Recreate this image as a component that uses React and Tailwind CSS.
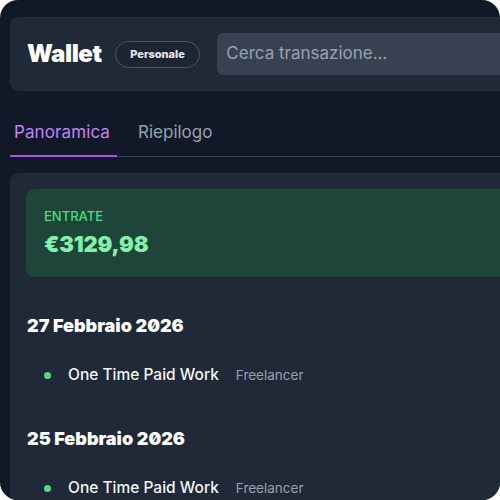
import React from "react";

const rows = [
  { date: "27 Febbraio 2026", title: "One Time Paid Work", tag: "Freelancer" },
  { date: "25 Febbraio 2026", title: "One Time Paid Work", tag: "Freelancer" },
];

const App = () => {
  return (
    <div className="w-[500px] h-[500px] bg-white overflow-hidden">
      <div
        className="w-[500px] h-[500px] rounded-[18px] bg-[#111827] overflow-hidden"
        style={{ fontFamily: "Inter, 'Noto Sans', sans-serif" }}
      >
        <div className="w-[640px] pl-[10px] pt-[17px]">
          {/* header */}
          <div className="h-[74px] rounded-lg bg-[#1f2937] flex items-center pl-[17px]">
            <h1 className="text-[24px] font-black text-white tracking-[-0.4px]">Wallet</h1>
            <span className="ml-[13px] h-[27px] px-[14.5px] flex items-center rounded-full border border-[#4b5563] bg-[#1d2533] text-[11px] font-extrabold text-gray-200">
              Personale
            </span>
            <div className="ml-[17px] h-[42px] flex-1 rounded-md bg-[#374151] flex items-center pl-[9px] text-[17px] text-gray-400">
              Cerca transazione...
            </div>
          </div>

          {/* tabs */}
          <div className="mt-[27px] flex border-b border-[#374151] h-[39px]">
            <div className="w-[107px] h-[39px] border-b-2 border-[#a855f7] text-[#c084fc] text-[17px] pl-[4px] pt-[2px] tracking-[0.1px]">
              Panoramica
            </div>
            <div className="ml-[21px] text-gray-400 text-[17px] pt-[2px]">Riepilogo</div>
          </div>

          {/* content */}
          <div className="mt-[16px] rounded-lg bg-[#1f2937] pl-[16px] pt-[16px] pb-8">
            <div className="h-[88px] rounded-lg bg-[#1e4539] pl-[18px] pt-[19px]">
              <div className="text-[13px] font-medium text-[#4ade80] leading-[16px]">ENTRATE</div>
              <div className="mt-[6px] text-[22px] font-black text-[#86efac] leading-[28px] tracking-[-0.2px]">
                €3129,98
              </div>
            </div>

            {rows.map((r, i) => (
              <div key={i} className={i === 0 ? "mt-[38px]" : "mt-[43px]"}>
                <div className="pl-[1px] text-[18px] font-black text-white leading-[22px] slashed-zero">
                  {r.date}
                </div>
                <div className="mt-[28px] flex items-center pl-[18px] leading-[20px]">
                  <span className="w-[7px] h-[7px] rounded-full bg-[#4ade80]" />
                  <span className="ml-[17px] text-[15.5px] font-medium text-gray-100">{r.title}</span>
                  <span className="ml-[17px] text-[13.5px] text-gray-400">{r.tag}</span>
                </div>
              </div>
            ))}
          </div>
        </div>
      </div>
    </div>
  );
};

export default App;
